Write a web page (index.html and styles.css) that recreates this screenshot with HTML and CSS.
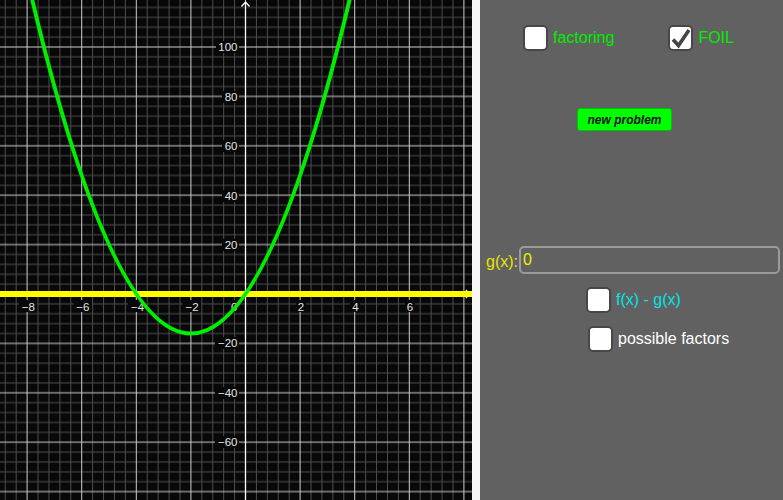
FILE: index.html
```html
<!DOCTYPE html>
<html lang="en">
<head>
<meta charset="utf-8">
<title>Factoring / FOIL</title>
<link rel="stylesheet" href="styles.css">
</head>
<body>
<div class="page">
  <div class="graph">
    <svg class="plot" width="472" height="500" viewBox="0 0 472 500" xmlns="http://www.w3.org/2000/svg">
      <defs>
        <pattern id="grid" patternUnits="userSpaceOnUse" x="218.2" y="269.3" width="54.6" height="49.4">
          <g class="minor">
            <line x1="5.46" y1="0" x2="5.46" y2="49.4"/>
            <line x1="16.38" y1="0" x2="16.38" y2="49.4"/>
            <line x1="38.22" y1="0" x2="38.22" y2="49.4"/>
            <line x1="49.14" y1="0" x2="49.14" y2="49.4"/>
            <line x1="0" y1="4.94" x2="54.6" y2="4.94"/>
            <line x1="0" y1="14.82" x2="54.6" y2="14.82"/>
            <line x1="0" y1="34.58" x2="54.6" y2="34.58"/>
            <line x1="0" y1="44.46" x2="54.6" y2="44.46"/>
          </g>
          <g class="major">
            <line x1="27.3" y1="0" x2="27.3" y2="49.4"/>
            <line x1="0" y1="24.7" x2="54.6" y2="24.7"/>
          </g>
        </pattern>
      </defs>
      <rect class="bg" x="0" y="0" width="472" height="500"/>
      <rect x="0" y="0" width="472" height="500" fill="url(#grid)"/>

      <g class="axes">
        <line x1="245.5" y1="2" x2="245.5" y2="500"/>
        <polyline points="241.5,6.5 245.5,2 249.5,6.5"/>
        <line x1="0" y1="294" x2="469" y2="294"/>
        <polyline points="466,290 469.5,294 466,298"/>
      </g>

      <g class="labelbg">
        <rect x="216" y="41" width="23" height="12"/>
        <rect x="222" y="91" width="17" height="12"/>
        <rect x="222" y="140" width="17" height="12"/>
        <rect x="222" y="190" width="17" height="12"/>
        <rect x="222" y="239" width="17" height="12"/>
        <rect x="215" y="337" width="24" height="12"/>
        <rect x="215" y="387" width="24" height="12"/>
        <rect x="215" y="436" width="24" height="12"/>
        <rect x="19" y="300" width="18" height="12"/>
        <rect x="74" y="300" width="18" height="12"/>
        <rect x="128" y="300" width="18" height="12"/>
        <rect x="183" y="300" width="18" height="12"/>
        <rect x="231" y="300" width="8" height="12"/>
        <rect x="296" y="300" width="10" height="12"/>
        <rect x="350" y="300" width="10" height="12"/>
        <rect x="405" y="300" width="10" height="12"/>
      </g>

      <g class="ylabels">
        <text x="237.5" y="51">100</text>
        <text x="237.5" y="101">80</text>
        <text x="237.5" y="150">60</text>
        <text x="237.5" y="200">40</text>
        <text x="237.5" y="249">20</text>
        <text x="237.5" y="347">−20</text>
        <text x="237.5" y="397">−40</text>
        <text x="237.5" y="446">−60</text>
        <text x="237.5" y="310.5">0</text>
      </g>
      <g class="xlabels">
        <text x="28.3" y="310.5">−8</text>
        <text x="82.9" y="310.5">−6</text>
        <text x="137.5" y="310.5">−4</text>
        <text x="192.1" y="310.5">−2</text>
        <text x="301" y="310.5">2</text>
        <text x="355.5" y="310.5">4</text>
        <text x="410" y="310.5">6</text>
      </g>

      <line class="gline" x1="0" y1="294" x2="472" y2="294"/>
      <path class="fcurve" d="M27.1,-22.2 Q190.9,689.2 354.7,-22.2"/>
    </svg>
  </div>
  <div class="divider"></div>
  <div class="panel">
    <div class="row row-options">
      <label class="check">
        <span class="box"></span>
        <span class="lbl green">factoring</span>
      </label>
      <label class="check foil">
        <span class="box">
          <svg class="tick" width="25" height="26" viewBox="0 0 25 26" xmlns="http://www.w3.org/2000/svg">
            <polyline points="5,14.5 10.5,20.5 21,5"/>
          </svg>
        </span>
        <span class="lbl green">FOIL</span>
      </label>
    </div>
    <div class="row row-button">
      <button class="btn" type="button">new problem</button>
    </div>
    <div class="row row-input">
      <span class="glabel">g(x):</span>
      <div class="input">0</div>
    </div>
    <div class="row row-diff">
      <label class="check">
        <span class="box"></span>
        <span class="lbl cyan">f(x) - g(x)</span>
      </label>
    </div>
    <div class="row row-factors">
      <label class="check">
        <span class="box"></span>
        <span class="lbl white">possible factors</span>
      </label>
    </div>
  </div>
</div>
</body>
</html>
```

FILE: styles.css
```css
* {
  box-sizing: border-box;
}

html, body {
  margin: 0;
  padding: 0;
  width: 783px;
  height: 500px;
  overflow: hidden;
  font-family: "Liberation Sans", Arial, sans-serif;
}

.page {
  display: flex;
  width: 783px;
  height: 500px;
}

.graph {
  width: 472px;
  height: 500px;
  flex: none;
}

.plot {
  display: block;
}

.bg {
  fill: #080808;
}

.minor line {
  stroke: #4d4d4d;
  stroke-width: 1;
}

.major line {
  stroke: #cfcfcf;
  stroke-width: 1;
}

.axes line,
.axes polyline {
  stroke: #ffffff;
  stroke-width: 1.3;
  fill: none;
}

.labelbg rect {
  fill: #080808;
}

.ylabels text,
.xlabels text {
  fill: #e6e6e6;
  font-family: "Liberation Sans", Arial, sans-serif;
  font-size: 11.5px;
}

.ylabels text {
  text-anchor: end;
}

.xlabels text {
  text-anchor: middle;
}

.gline {
  stroke: #ffff00;
  stroke-width: 6;
}

.fcurve {
  stroke: #00ee00;
  stroke-width: 4;
  fill: none;
}

.divider {
  width: 8px;
  height: 500px;
  flex: none;
  background: #f7f7f7;
}

.panel {
  flex: 1;
  height: 500px;
  background: #616161;
  display: flex;
  flex-direction: column;
}

.row {
  display: flex;
  align-items: center;
}

.check {
  display: flex;
  align-items: center;
  gap: 5px;
}

.box {
  display: block;
  width: 25px;
  height: 26px;
  background: #ffffff;
  border: 2px solid #474747;
  border-radius: 5px;
  position: relative;
  flex: none;
}

.tick {
  position: absolute;
  left: -2px;
  top: -2px;
}

.tick polyline {
  fill: none;
  stroke: #454545;
  stroke-width: 3.6;
  stroke-linejoin: miter;
}

.lbl {
  font-size: 16px;
  line-height: 18px;
}

.green {
  color: #00ee00;
}

.cyan {
  color: #00e6e6;
}

.white {
  color: #ffffff;
}

.row-options {
  margin-top: 25px;
  padding-left: 43px;
}

.foil {
  margin-left: 54px;
}

.row-button {
  margin-top: 57px;
  padding-left: 97px;
}

.btn {
  width: 95px;
  height: 23px;
  padding: 0;
  background: #00ff00;
  border: 1px solid #00c400;
  border-radius: 3px;
  font-family: "Liberation Sans", Arial, sans-serif;
  font-size: 12px;
  font-weight: bold;
  font-style: italic;
  color: #111111;
}

.row-input {
  margin-top: 115px;
  padding-left: 6px;
  gap: 1px;
}

.glabel {
  font-size: 16px;
  color: #e6e600;
  width: 32px;
  padding-top: 3px;
}

.input {
  width: 261px;
  height: 28px;
  border: 2px solid #9a9a9a;
  border-radius: 5px;
  padding-left: 2px;
  font-size: 16px;
  line-height: 24px;
  color: #f0f000;
}

.row-diff {
  margin-top: 13px;
  padding-left: 106px;
}

.row-diff .check {
  gap: 5px;
}

.row-factors {
  margin-top: 13px;
  padding-left: 108px;
}

.row-factors .check {
  gap: 5px;
}
```
